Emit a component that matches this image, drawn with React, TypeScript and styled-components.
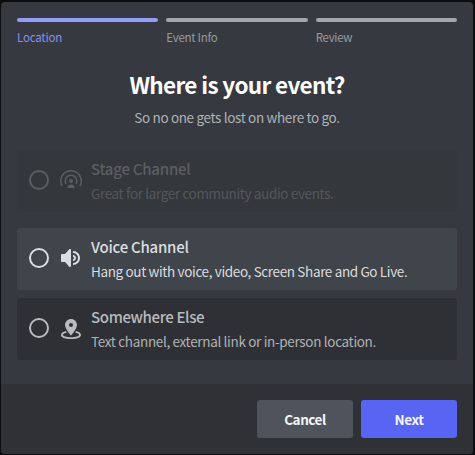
import React from "react";
import styled, { createGlobalStyle } from "styled-components";

const GlobalStyle = createGlobalStyle`
  *, *::before, *::after { box-sizing: border-box; }
  body {
    margin: 0;
    background: #0c0d0f;
    font-family: "Noto Sans CJK JP", "Noto Sans", sans-serif;
  }
`;

const Page = styled.main`
  height: 455px;
  padding: 2px 2px 1px 1px;
`;

const Modal = styled.section`
  display: flex;
  flex-direction: column;
  width: 472px;
  height: 452px;
  border-radius: 4px;
  overflow: hidden;
  background: #36393f;
`;

const Body = styled.div`
  flex: 1;
  padding: 16px 16px 0;
`;

const Steps = styled.ol`
  display: grid;
  grid-template-columns: repeat(3, 1fr);
  gap: 8px;
  height: 54px;
  margin: 0;
  padding: 0;
  list-style: none;
`;

const Step = styled.li<{ $active?: boolean; $spacing: number }>`
  color: ${(p) => (p.$active ? "#8b91ee" : "#999b9f")};
  font-size: 11.5px;
  line-height: 16px;
  letter-spacing: ${(p) => p.$spacing}px;
  white-space: nowrap;

  &::before {
    content: "";
    display: block;
    height: 4px;
    margin-bottom: 7px;
    border-radius: 2px;
    background: ${(p) => (p.$active ? "#949cf7" : "#a3a6aa")};
  }
`;

const Title = styled.h1`
  margin: -3px 0 0;
  color: #fff;
  font-size: 22.5px;
  font-weight: 700;
  line-height: 30px;
  letter-spacing: -0.66px;
  text-align: center;
  white-space: nowrap;
`;

const Subtitle = styled.p`
  margin: 8px 0 0;
  height: 43px;
  color: #b0b3b7;
  font-size: 13.5px;
  line-height: 20px;
  letter-spacing: -0.35px;
  text-align: center;
  white-space: nowrap;
`;

type Tone = "disabled" | "hover" | "normal";

const tones: Record<Tone, { bg: string; title: string; text: string; gap: number }> = {
  disabled: { bg: "#34373b", title: "#5b5e62", text: "#54575b", gap: 16 },
  hover: { bg: "#40444b", title: "#dcddde", text: "#dcddde", gap: 8 },
  normal: { bg: "#2f3035", title: "#b9bbbe", text: "#b0b2b6", gap: 0 },
};

const Option = styled.label<{ $tone: Tone }>`
  display: flex;
  align-items: center;
  gap: 8px;
  height: 62px;
  margin-bottom: ${(p) => tones[p.$tone].gap}px;
  padding: 0 10px;
  border-radius: 3px;
  background: ${(p) => tones[p.$tone].bg};
  color: ${(p) => tones[p.$tone].title};
`;

const Radio = styled.span`
  flex: none;
  width: 20px;
  height: 20px;
  margin: 0 2px 2px;
  border: 2px solid currentColor;
  border-radius: 50%;
`;

const Icon = styled.svg`
  flex: none;
  width: 24px;
  height: 24px;
  margin-bottom: 2px;
  fill: currentColor;
`;

const Copy = styled.span`
  display: block;
  white-space: nowrap;
`;

const OptionTitle = styled.span<{ $spacing: number }>`
  display: block;
  margin-bottom: 4px;
  font-size: 15px;
  font-weight: 500;
  line-height: 20px;
  letter-spacing: ${(p) => p.$spacing}px;
`;

const OptionText = styled.span<{ $tone: Tone; $spacing: number }>`
  display: block;
  color: ${(p) => tones[p.$tone].text};
  font-size: 13.5px;
  line-height: 20px;
  letter-spacing: ${(p) => p.$spacing}px;
`;

const Footer = styled.footer`
  display: flex;
  justify-content: flex-end;
  gap: 8px;
  height: 70px;
  padding: 16px;
  background: #2f3136;
`;

const Button = styled.button<{ $primary?: boolean }>`
  width: 96px;
  height: 38px;
  padding: 0;
  border: 0;
  border-radius: 3px;
  background: ${(p) => (p.$primary ? "#5865f2" : "#4f545c")};
  color: #f4f5f7;
  font: 700 13.5px/20px "Noto Sans CJK JP", "Noto Sans", sans-serif;
  letter-spacing: -0.45px;
`;

const StageIcon = () => (
  <Icon viewBox="0 0 24 24">
    <path d="M14 13C14 14.1 13.1 15 12 15C10.9 15 10 14.1 10 13C10 11.9 10.9 11 12 11C13.1 11 14 11.9 14 13ZM8.5 20V19.5C8.5 17.8 9.94 16.5 12 16.5C14.06 16.5 15.5 17.8 15.5 19.5V20H8.5ZM7 13C7 10.24 9.24 8 12 8C14.76 8 17 10.24 17 13C17 13.91 16.74 14.75 16.31 15.49L17.62 16.25C18.17 15.29 18.5 14.19 18.5 13C18.5 9.42 15.58 6.5 12 6.5C8.42 6.5 5.5 9.42 5.5 13C5.5 14.18 5.82 15.29 6.38 16.25L7.69 15.49C7.26 14.75 7 13.91 7 13ZM2.5 13C2.5 7.75 6.75 3.5 12 3.5C17.25 3.5 21.5 7.75 21.5 13C21.5 14.73 21.03 16.35 20.22 17.75L21.51 18.5C22.45 16.88 23 15 23 13C23 6.93 18.07 2 12 2C5.93 2 1 6.93 1 13C1 15 1.55 16.88 2.48 18.49L3.77 17.74C2.97 16.35 2.5 14.73 2.5 13Z" />
  </Icon>
);

const SpeakerIcon = () => (
  <Icon viewBox="0 0 24 24">
    <path d="M11.383 3.079C11.009 2.925 10.579 3.01 10.293 3.296L6 8.002H3C2.45 8.002 2 8.453 2 9.002V15.002C2 15.552 2.45 16.002 3 16.002H6L10.293 20.71C10.579 20.996 11.009 21.082 11.383 20.927C11.757 20.772 12 20.407 12 20.002V4.002C12 3.599 11.757 3.232 11.383 3.079ZM14 5.002V7.002C16.757 7.002 19 9.246 19 12.002C19 14.759 16.757 17.002 14 17.002V19.002C17.86 19.002 21 15.863 21 12.002C21 8.143 17.86 5.002 14 5.002ZM14 9.002C15.654 9.002 17 10.349 17 12.002C17 13.657 15.654 15.002 14 15.002V13.002C14.551 13.002 15 12.553 15 12.002C15 11.451 14.551 11.002 14 11.002V9.002Z" />
  </Icon>
);

const PlaceIcon = () => (
  <Icon viewBox="0 0 24 24">
    <path
      fillRule="evenodd"
      d="M12 3C8.7 3 6 5.7 6 9C6 13 12 19.5 12 19.5C12 19.5 18 13 18 9C18 5.7 15.3 3 12 3ZM12 11A2 2 0 1 1 12 7A2 2 0 0 1 12 11Z"
    />
    <path d="M6.8 15C4 15.7 2 17.2 2 18.9C2 21.4 6.4 23 12 23C17.6 23 22 21.4 22 18.9C22 17.2 20 15.7 17.2 15L16 16.6C18.5 17 20 18 20 18.9C20 20 16.8 21.2 12 21.2C7.2 21.2 4 20 4 18.9C4 18 5.5 17 8 16.6Z" />
  </Icon>
);

const options = [
  { tone: "disabled" as Tone, Glyph: StageIcon, title: "Stage Channel", text: "Great for larger community audio events.", ts: -0.23, ds: -0.36 },
  { tone: "hover" as Tone, Glyph: SpeakerIcon, title: "Voice Channel", text: "Hang out with voice, video, Screen Share and Go Live.", ts: -0.23, ds: -0.36 },
  { tone: "normal" as Tone, Glyph: PlaceIcon, title: "Somewhere Else", text: "Text channel, external link or in-person location.", ts: -0.36, ds: -0.33 },
];

export default function App() {
  return (
    <Page>
      <GlobalStyle />
      <Modal>
        <Body>
          <Steps>
            <Step $active $spacing={-0.2}>Location</Step>
            <Step $spacing={-0.27}>Event Info</Step>
            <Step $spacing={-0.3}>Review</Step>
          </Steps>
          <Title>Where is your event?</Title>
          <Subtitle>So no one gets lost on where to go.</Subtitle>
          {options.map(({ tone, Glyph, title, text, ts, ds }) => (
            <Option key={title} $tone={tone}>
              <Radio />
              <Glyph />
              <Copy>
                <OptionTitle $spacing={ts}>{title}</OptionTitle>
                <OptionText $tone={tone} $spacing={ds}>{text}</OptionText>
              </Copy>
            </Option>
          ))}
        </Body>
        <Footer>
          <Button>Cancel</Button>
          <Button $primary>Next</Button>
        </Footer>
      </Modal>
    </Page>
  );
}
